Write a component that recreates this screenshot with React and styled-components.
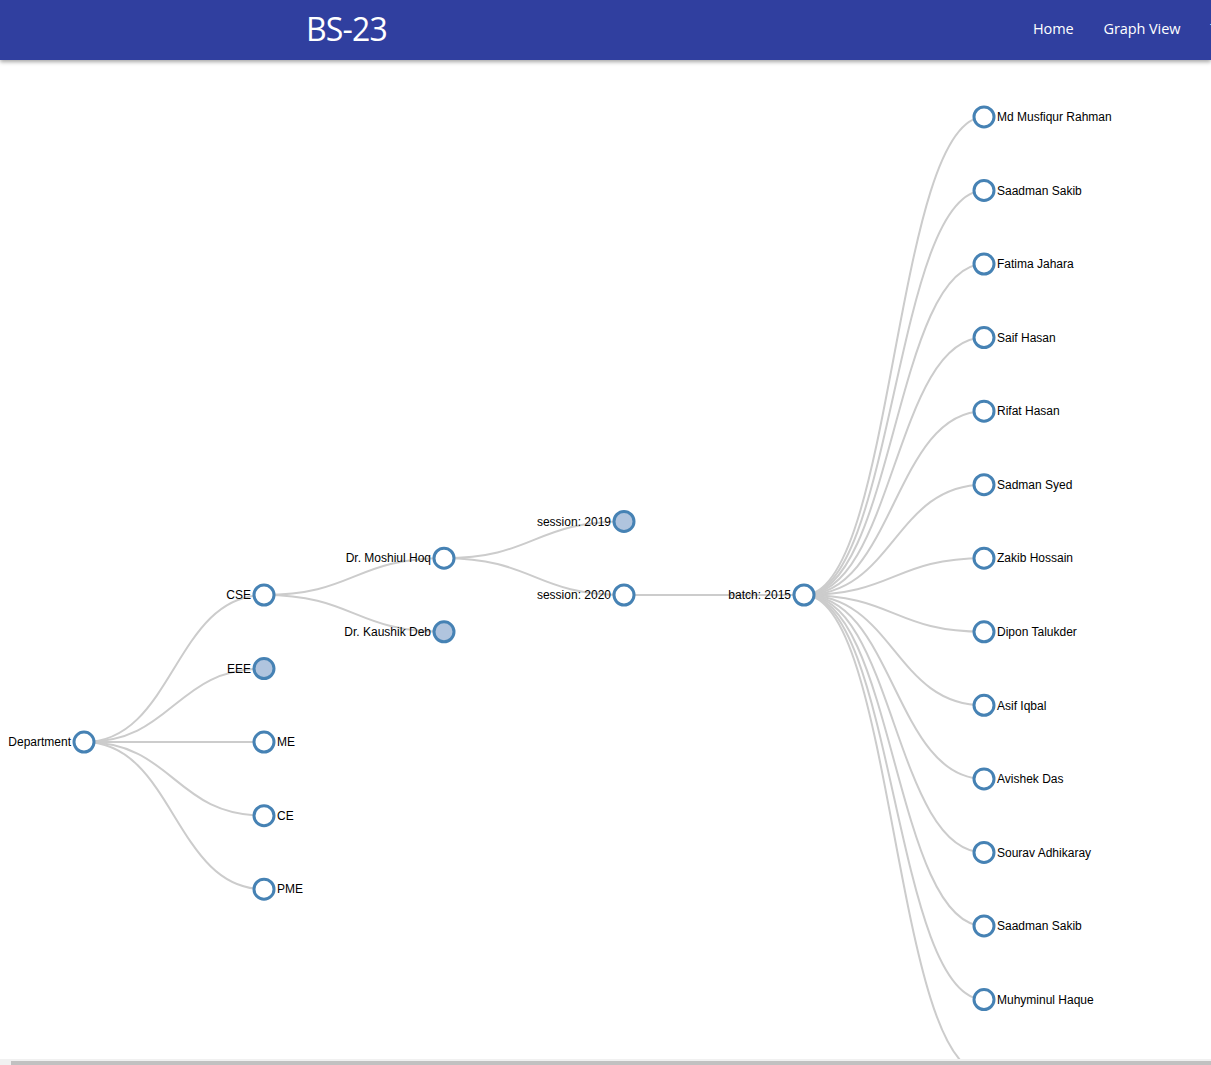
import React from 'react';
import styled, { createGlobalStyle } from 'styled-components';

const GlobalStyle = createGlobalStyle`
  html, body {
    margin: 0;
    padding: 0;
    overflow: hidden;
    background: #fff;
  }
  * { box-sizing: border-box; }
`;

const Page = styled.div`
  display: flex;
  flex-direction: column;
  width: 100%;
`;

const Header = styled.header`
  position: relative;
  z-index: 2;
  display: flex;
  align-items: center;
  height: 60px;
  background-color: #303f9f;
  box-shadow: 0 2px 4px rgba(0, 0, 0, 0.35);
  overflow: hidden;
  white-space: nowrap;
  font-family: "Open Sans", "Noto Sans", sans-serif;
  color: #fff;
`;

const Brand = styled.div`
  flex: 0 0 auto;
  width: 727px;
  margin-left: 306px;
  font-size: 32px;
  letter-spacing: -0.8px;
  line-height: 1;
  padding-bottom: 2px;
`;

const Nav = styled.nav`
  display: flex;
  flex: 0 0 auto;
  gap: 30px;
`;

const NavLink = styled.a`
  color: #fff;
  font-size: 14.5px;
  letter-spacing: -0.1px;
  text-decoration: none;
  padding-bottom: 3px;
  cursor: pointer;
`;

const GraphArea = styled.div`
  height: 999px;
  overflow: hidden;
`;

const ScrollTrack = styled.div`
  display: flex;
  height: 17px;
  background: #f1f1f1;
  padding: 2px 0 0 11px;
`;

const ScrollThumb = styled.div`
  flex: 1;
  background: #c1c1c1;
`;

const Canvas = styled.svg`
  display: block;
`;

const Link = styled.path`
  fill: none;
  stroke: #ccc;
  stroke-width: 2px;
`;

const NodeCircle = styled.circle`
  fill: ${p => (p.$collapsed ? '#b0c4de' : '#fff')};
  stroke: #4682b4;
  stroke-width: 3px;
`;

const Label = styled.text`
  font-family: "Liberation Sans", Arial, sans-serif;
  font-size: 12px;
  fill: #000;
`;

const students = [
  'Md Musfiqur Rahman', 'Saadman Sakib', 'Fatima Jahara', 'Saif Hasan',
  'Rifat Hasan', 'Sadman Syed', 'Zakib Hossain', 'Dipon Talukder',
  'Asif Iqbal', 'Avishek Das', 'Sourav Adhikaray', 'Saadman Sakib',
  'Muhyminul Haque', 'Tanvir Ahmed',
];

// slot = vertical position in units of the tree spacing
const tree = {
  name: 'Department', slot: 2,
  children: [
    {
      name: 'CSE', slot: 0,
      children: [
        {
          name: 'Dr. Moshiul Hoq', slot: -0.5,
          children: [
            { name: 'session: 2019', slot: -1, collapsed: true },
            {
              name: 'session: 2020', slot: 0,
              children: [
                {
                  name: 'batch: 2015', slot: 0,
                  children: students.map((s, i) => ({ name: s, slot: i - 6.5 })),
                },
              ],
            },
          ],
        },
        { name: 'Dr. Kaushik Deb', slot: 0.5, collapsed: true },
      ],
    },
    { name: 'EEE', slot: 1, collapsed: true },
    { name: 'ME', slot: 2 },
    { name: 'CE', slot: 3 },
    { name: 'PME', slot: 4 },
  ],
};

const LEFT = 84;
const DEPTH_STEP = 180;
const MID_Y = 535;
const SPACING = 73.55;

function flatten(node, depth, parent, nodes, links) {
  const pos = { ...node, x: LEFT + depth * DEPTH_STEP, y: MID_Y + node.slot * SPACING };
  nodes.push(pos);
  if (parent) links.push({ source: parent, target: pos });
  (node.children || []).forEach(c => flatten(c, depth + 1, pos, nodes, links));
  return { nodes, links };
}

const diagonal = (s, t) => {
  const mx = (s.x + t.x) / 2;
  return `M${s.x},${s.y}C${mx},${s.y} ${mx},${t.y} ${t.x},${t.y}`;
};

function TreeGraph() {
  const { nodes, links } = flatten(tree, 0, null, [], []);
  return (
    <Canvas width="1211" height="999">
      {links.map((l, i) => (
        <Link key={i} d={diagonal(l.source, l.target)} />
      ))}
      {nodes.map((n, i) => {
        const hasKids = n.children || n.collapsed;
        return (
          <g key={i} transform={`translate(${n.x},${n.y})`}>
            <NodeCircle r="10" $collapsed={n.collapsed} />
            <Label
              x={hasKids ? -13 : 13}
              dy=".35em"
              textAnchor={hasKids ? 'end' : 'start'}
            >
              {n.name}
            </Label>
          </g>
        );
      })}
    </Canvas>
  );
}

export default function App() {
  return (
    <Page>
      <GlobalStyle />
      <Header>
        <Brand>BS-23</Brand>
        <Nav>
          <NavLink>Home</NavLink>
          <NavLink>Graph View</NavLink>
          <NavLink>Tree View</NavLink>
        </Nav>
      </Header>
      <GraphArea>
        <TreeGraph />
      </GraphArea>
      <ScrollTrack>
        <ScrollThumb />
      </ScrollTrack>
    </Page>
  );
}
